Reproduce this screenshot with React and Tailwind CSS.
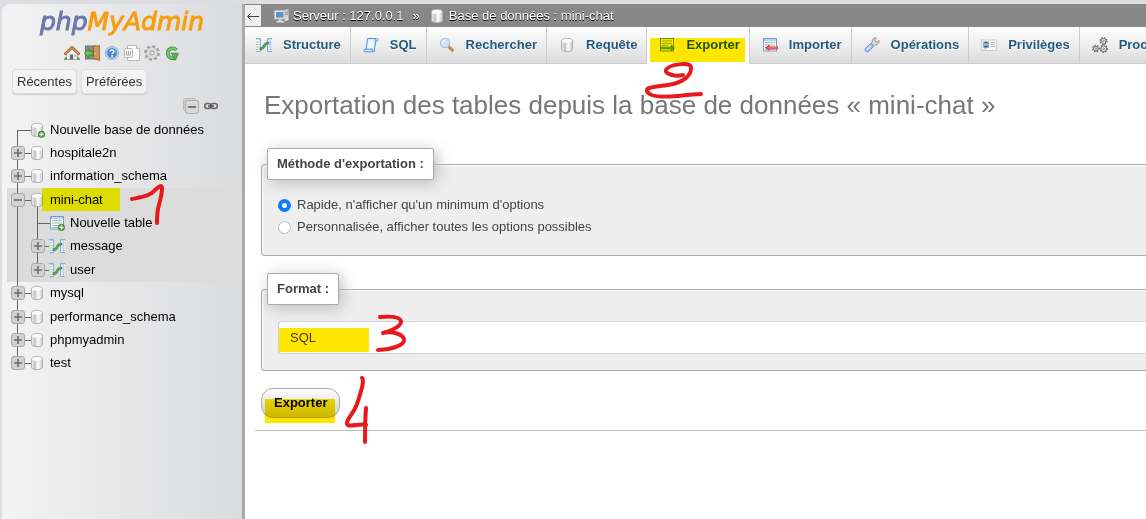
import React from 'react';

function Svg({ children, className = 'size-4 shrink-0' }) {
  return (
    <svg viewBox="0 0 16 16" className={className} aria-hidden="true">
      {children}
    </svg>
  );
}

function DbIcon({ plus, className }) {
  return (
    <Svg className={className}>
      <defs>
        <linearGradient id="dbBody" x1="0" x2="1">
          <stop offset="0" stopColor="#f4f4f4" />
          <stop offset="0.3" stopColor="#c4c4c4" />
          <stop offset="0.6" stopColor="#ffffff" />
          <stop offset="1" stopColor="#c6c6c6" />
        </linearGradient>
      </defs>
      <path d="M2.500 3.800C2.500 .6 13.500.6 13.500 3.800V12.200C13.500 15.400 2.500 15.400 2.500 12.200Z" fill="url(#dbBody)" stroke="#b0b0b0" />
      <ellipse cx="8" cy="3.800" rx="4.900" ry="2" fill="#fafafa" />
      {plus && (
        <>
          <circle cx="12.500" cy="12.300" r="3.300" fill="#4f9a3c" stroke="#3a7a2c" strokeWidth=".6" />
          <path d="M12.500 10.300v4M10.500 12.300h4" stroke="#fff" strokeWidth="1.300" />
        </>
      )}
    </Svg>
  );
}

function RelationIcon() {
  return (
    <Svg>
      <path d="M0 1.500h4.500v13H0zM11.500 1.500H16v13h-4.500z" fill="#f3f8fe" />
      <path d="M0 1.500h4.500v13H0M16 1.500h-4.500v13H16" fill="none" stroke="#86abdf" />
      <path d="M0 2.500h4M12 2.500h4" stroke="#bcd3f2" />
      <path d="M0 5h3.500M0 7.500h3.500M0 10h3.500M0 12.500h3.500" stroke="#a9c29b" strokeWidth=".9" />
      <path d="M12.500 5H16M12.500 7.500H16M12.500 10H16M12.500 12.500H16M14.500 3v11" stroke="#a9c4ea" strokeWidth=".8" />
      <path d="M4.800 11.700c2.200.3 2.600-1.200 3.400-2.800s1.800-2.700 3.800-2.800" fill="none" stroke="#43934a" strokeWidth="2.800" strokeLinecap="round" />
      <path d="M5.500 11.300c1.500 0 2-1 2.600-2.700s1.700-2.400 3.400-2.400" fill="none" stroke="#72bb68" strokeWidth=".8" />
    </Svg>
  );
}

function Sheet() {
  return (
    <>
      <rect x="1.500" y="1.500" width="13" height="12.500" fill="#fff" stroke="#6f9bd8" />
      <path d="M2 3h12" stroke="#b7cff0" strokeWidth="2" />
      <path d="M3 5.500h10M3 8h10M3 10.500h10M3 12.500h10" stroke="#93b889" strokeWidth=".9" />
      <path d="M6 4v9M10 4v9" stroke="#b9d0ee" strokeWidth=".8" />
    </>
  );
}

function NewTableIcon() {
  return (
    <Svg>
      <Sheet />
      <circle cx="12.500" cy="12.400" r="3.200" fill="#4f9a3c" stroke="#3a7a2c" strokeWidth=".6" />
      <path d="M12.500 10.400v4M10.500 12.400h4" stroke="#fff" strokeWidth="1.300" />
    </Svg>
  );
}

function ExportIcon() {
  return (
    <Svg>
      <rect x="1.500" y="1.500" width="13" height="12.500" fill="#fff" stroke="#6f9bd8" />
      <path d="M3 4h10M3 6.500h10M3 8.500h6" stroke="#93b889" strokeWidth=".9" />
      <path d="M5 3v6M8 3v6M11 3v5" stroke="#b9d0ee" strokeWidth=".7" />
      <path d="M1 9.700h11V7.500l4 3.500-4 3.500v-2.200H1z" fill="#3d9a3a" />
      <path d="M2 11h12" stroke="#93dc88" strokeWidth=".8" />
    </Svg>
  );
}

function ImportIcon() {
  return (
    <Svg>
      <Sheet />
      <path d="M16 9.500H7.500V7.500l-4.500 3.300 4.500 3.400v-2H16z" fill="#e2333a" />
      <path d="M5.500 10.900H15" stroke="#ff9a96" strokeWidth=".9" />
    </Svg>
  );
}

function SqlIcon() {
  return (
    <Svg>
      <path d="M4.500 1.500h9c2 0 2 2.600.5 2.600h-1.300L11.500 12c.8 1.200.2 2.800-1 2.800H2c-1.800 0-1.600-2.600 0-2.600h1z" fill="#d3e4fa" stroke="#5b93d6" strokeLinejoin="round" />
      <path d="M5.500 2.800h6L10.300 11.500H4.300z" fill="#edf4fe" />
      <path d="M12.700 4.100c-1.100-.3-1-2.200.3-2.600M3 12.200h6.800c-.7.900-.2 2.300.6 2.500" fill="none" stroke="#5b93d6" />
    </Svg>
  );
}

function SearchIcon() {
  return (
    <Svg>
      <path d="M9.700 9.700l3.700 3.400" stroke="#b87a3c" strokeWidth="3" strokeLinecap="round" />
      <path d="M10.500 10l2.900 2.700" stroke="#edc08c" strokeWidth="1" />
      <circle cx="6" cy="6" r="4.600" fill="#cfe1f8" stroke="#b4c2d8" strokeWidth="1.300" />
      <path d="M3.600 5.500a2.800 2.800 0 0 1 2.400-2.200" fill="none" stroke="#fff" strokeWidth="1.200" />
    </Svg>
  );
}

function WrenchIcon() {
  return (
    <Svg>
      <path d="M8.300 5c-.5-2.500 1.500-4.700 4-4.200L10.700 3l.6 1.700 1.800.5 1.900-1.700c.7 2.800-1.800 4.900-4.200 4.200L9.500 9 7 6.500z" fill="#dcdcdc" stroke="#8c8c8c" strokeWidth=".9" />
      <path d="M6.800 6.300L9.700 9.200l-5 5.300c-2 1.500-4.800-1.100-3.200-3.200z" fill="#a5c3f3" stroke="#5a86cc" strokeWidth=".9" />
      <path d="M7 8.300L3 12.500" stroke="#dbe8fc" strokeWidth="1.200" />
    </Svg>
  );
}

function PrivIcon() {
  return (
    <Svg>
      <rect x=".5" y="3" width="15" height="10.500" fill="#fdfdfd" stroke="#cacaca" />
      <rect x="2" y="4.500" width="6" height="6" fill="#6fb0f0" />
      <circle cx="5" cy="6.700" r="1.500" fill="#e8b087" />
      <path d="M3.200 6.200c.5-1.800 3.100-1.800 3.600 0z" fill="#7a4a22" />
      <path d="M2.500 10.500c.4-2.500 4.600-2.500 5 0z" fill="#2d69b8" />
      <path d="M9.500 5.500h4.500M9.500 7.500h4.500M9.500 9.500h4.500M2.500 12h3.500" stroke="#a6adb7" strokeWidth=".9" />
    </Svg>
  );
}

function Cog({ cx, cy, r }) {
  return (
    <g transform={`translate(${cx} ${cy})`}>
      <circle r={r + 0.8} fill="none" stroke="#5c5c5c" strokeWidth="1.300" strokeDasharray="1.300 1.400" />
      <circle r={r} fill="#f8f8f8" stroke="#5c5c5c" strokeWidth=".9" />
      <circle r=".9" fill="none" stroke="#5c5c5c" strokeWidth=".7" />
    </g>
  );
}

function ProcIcon() {
  return (
    <Svg>
      <Cog cx={11.500} cy={4} r={2.600} />
      <Cog cx={3.800} cy={11.500} r={2.400} />
      <Cog cx={11.700} cy={11.700} r={2.800} />
    </Svg>
  );
}

function HomeIcon() {
  return (
    <Svg>
      <path d="M0 15h16v-1.500H0z" fill="#6fae4e" />
      <path d="M2.500 8.500L8 3.500l5.500 5V14.500h-11z" fill="#f3f3ef" stroke="#9a9a92" strokeWidth=".8" />
      <path d="M1.300 8.800L8 2.300l6.700 6.500" fill="none" stroke="#9b5c22" strokeWidth="2.600" strokeLinejoin="round" strokeLinecap="round" />
      <path d="M1.300 8.800L8 2.300l6.700 6.500" fill="none" stroke="#d79a55" strokeWidth="1.300" strokeLinejoin="round" strokeLinecap="round" />
      <rect x="5.800" y="9.500" width="3.400" height="5" fill="#6e6e72" />
      <rect x="10.500" y="9.800" width="2" height="2" fill="#8fb3df" />
      <path d="M.5 14c.7-2.500 2.300-2 2.800 0M12.800 14c.7-2.500 2.300-2 2.800 0" fill="#4f9a3c" />
    </Svg>
  );
}

function ExitIcon() {
  return (
    <Svg>
      <rect x="1.500" y="1" width="10" height="13" fill="#8b8f8c" stroke="#6e706e" />
      <path d="M9.500 1.500L15.500.5v15l-6-2z" fill="#cf9558" stroke="#9a6026" strokeWidth=".8" />
      <circle cx="11.300" cy="8.500" r=".7" fill="#f6dc8a" />
      <path d="M9 6.300H5V4L.3 8.300 5 12.500v-2.300h4z" fill="#6cc061" stroke="#2f7d2c" strokeWidth=".8" />
    </Svg>
  );
}

function HelpIcon() {
  return (
    <Svg>
      <circle cx="8" cy="8" r="6.700" fill="#c9daf1" stroke="#8aa9d6" strokeWidth=".8" />
      <circle cx="8" cy="8" r="5" fill="#4f86cf" stroke="#7ba3dd" strokeWidth=".8" />
      <path d="M6.200 6.600c0-2.400 3.700-2.300 3.700 0 0 1.400-1.800 1.300-1.800 2.700" fill="none" stroke="#fff" strokeWidth="1.400" />
      <circle cx="8.100" cy="11" r=".9" fill="#fff" />
    </Svg>
  );
}

function DocsIcon() {
  return (
    <Svg>
      <path d="M3.500.5h9l3 3v12h-12z" fill="#fcfcfc" stroke="#b8b8b8" />
      <path d="M12.500.5v3h3" fill="#e6e6e6" stroke="#b8b8b8" />
      <rect x=".5" y="3.500" width="8" height="9" rx="1" fill="#f2f2f2" stroke="#b8b8b8" />
      <path d="M2.500 6v4h4V6M4.500 6v4" fill="none" stroke="#aaa" />
    </Svg>
  );
}

function GearIcon() {
  return (
    <Svg>
      <circle cx="8" cy="8" r="6.600" fill="none" stroke="#9c9c9c" strokeWidth="2.400" strokeDasharray="2.900 2.284" />
      <circle cx="8" cy="8" r="4.900" fill="#dcdcdc" stroke="#9c9c9c" strokeWidth="1.600" />
      <circle cx="8" cy="8" r="4.600" fill="none" stroke="#dedede" strokeWidth="1.600" />
      <circle cx="8" cy="8" r="2" fill="#efefef" stroke="#949494" strokeWidth=".9" />
    </Svg>
  );
}

function ReloadIcon() {
  return (
    <Svg>
      <path d="M12.500 5.200C9.500 1.500 3.800 3.500 3.800 8.200c0 4.300 4.200 6.300 7.400 4.600" fill="none" stroke="#3d8f3c" strokeWidth="3.600" />
      <path d="M12.500 5.200C9.500 1.500 3.800 3.500 3.800 8.200c0 4.300 4.200 6.300 7.400 4.600" fill="none" stroke="#7cc873" strokeWidth="1.800" />
      <path d="M7 8.300h7.500L11.500 15.200z" fill="#5fb458" stroke="#3d8f3c" strokeWidth=".8" />
    </Svg>
  );
}

function CollapseIcon() {
  return (
    <Svg>
      <rect x=".5" y=".5" width="12" height="12.500" rx="2" fill="#d2d2d2" stroke="#b8b8b8" />
      <rect x="2.500" y="2.500" width="13" height="13" rx="2" fill="#d8d8d8" stroke="#acacac" />
      <path d="M5 9h8" stroke="#666" strokeWidth="1.700" />
    </Svg>
  );
}

function LinkIcon() {
  return (
    <Svg>
      <rect x="1.700" y="5.600" width="6.300" height="5" rx="2.500" fill="none" stroke="#666" strokeWidth="1.500" />
      <rect x="8" y="5.600" width="6.300" height="5" rx="2.500" fill="none" stroke="#666" strokeWidth="1.500" />
      <path d="M5 8.100h6" stroke="#555" strokeWidth="1.500" />
    </Svg>
  );
}

function ServerIcon() {
  return (
    <Svg>
      <path d="M10 1.500l5-1v12l-5 1.500z" fill="#d9d9d9" stroke="#777" strokeWidth=".7" />
      <path d="M11 4.500l3-.5M11 6.500l3-.5" stroke="#666" strokeWidth=".8" />
      <circle cx="14" cy="3" r=".7" fill="#5cc04e" />
      <rect x=".5" y="2.500" width="10.500" height="8.500" fill="#e4e4e4" stroke="#bcbcbc" />
      <rect x="2" y="4" width="7.500" height="5.500" fill="#5b8fd0" />
      <path d="M4.500 11.500h3v1.500H10v1.500H2.500V13h2z" fill="#dcdcdc" />
    </Svg>
  );
}

function Toggle({ open, label }) {
  return (
    <button type="button" aria-label={label} className="relative flex size-[14px] items-center justify-center">
      <svg viewBox="0 0 14 14" className="size-[14px]" aria-hidden="true">
        <rect x=".5" y=".5" width="13" height="13" rx="2.500" fill="#d2d2d2" stroke="#a8a8a8" />
        <path d={open ? 'M3 7h8' : 'M3 7h8M7 3v8'} stroke="#6c6c6c" strokeWidth="1.600" />
      </svg>
    </button>
  );
}

const LINE = { full: 'inset-y-0', start: 'top-1/2 bottom-0', end: 'top-0 bottom-1/2' };

function VLine({ span }) {
  return <span className={`absolute left-[10px] w-px bg-[#666] ${LINE[span]}`} />;
}

const ROWS = [
  { name: 'Nouvelle base de données', icon: 'newdb', line: 'start' },
  { name: 'hospitale2n', icon: 'db', toggle: true },
  { name: 'information_schema', icon: 'db', toggle: true },
  { name: 'mini-chat', icon: 'db', toggle: true, open: true, active: true, marked: true },
  { name: 'Nouvelle table', icon: 'newtable', nested: true, active: true, line: 'full' },
  { name: 'message', icon: 'rel', nested: true, toggle: true, active: true, line: 'full' },
  { name: 'user', icon: 'rel', nested: true, toggle: true, active: true, line: 'end' },
  { name: 'mysql', icon: 'db', toggle: true },
  { name: 'performance_schema', icon: 'db', toggle: true },
  { name: 'phpmyadmin', icon: 'db', toggle: true },
  { name: 'test', icon: 'db', toggle: true, line: 'end' },
];

const ICONS = {
  newdb: <DbIcon plus className="size-4 shrink-0" />,
  db: <DbIcon className="size-4 shrink-0" />,
  newtable: <NewTableIcon />,
  rel: <RelationIcon />,
};

function TreeRow({ row }) {
  return (
    <li className={`flex items-stretch ${row.active ? 'bg-[#dcdcdc]' : ''}`}>
      {row.nested && (
        <span className="relative w-5 shrink-0">
          <VLine span="full" />
        </span>
      )}
      <span className="relative flex w-[22px] shrink-0 items-center justify-center">
        <VLine span={row.line || 'full'} />
        <span className="absolute top-1/2 -right-[3px] left-[10px] h-px bg-[#666]" />
        {row.toggle && <Toggle open={row.open} label={row.name} />}
      </span>
      <span className="relative flex w-4 shrink-0 items-center justify-center">
        {row.open && <span className="absolute top-1/2 bottom-0 left-2 w-px bg-[#666]" />}
        <span className="relative">{ICONS[row.icon]}</span>
      </span>
      <a href="#" className="relative flex items-center pl-[5px] text-black">
        {row.name}
        {row.marked && <span className="absolute inset-y-0 -left-[3px] w-[78px] bg-[#ffff00] mix-blend-multiply" />}
      </a>
    </li>
  );
}

function Sidebar() {
  return (
    <aside className="flex w-[240px] shrink-0 flex-col rounded-tl-lg bg-linear-to-r from-[#f3f3f3] to-[#dadbdd]">
      <h2 className="pt-[2px] text-center font-['DejaVu_Sans',sans-serif] text-[25px] leading-[32px] italic">
        <span className="text-[#6c78af] [-webkit-text-stroke:1px_#6c78af]">php</span>
        <span className="text-[#f89c0e] [-webkit-text-stroke:1px_#f89c0e]">MyAdmin</span>
      </h2>
      <nav className="flex justify-center gap-1 pt-[7px]">
        <a href="#" aria-label="Accueil"><HomeIcon /></a>
        <a href="#" aria-label="Quitter"><ExitIcon /></a>
        <a href="#" aria-label="Documentation phpMyAdmin"><HelpIcon /></a>
        <a href="#" aria-label="Documentation"><DocsIcon /></a>
        <a href="#" aria-label="Paramètres"><GearIcon /></a>
        <a href="#" aria-label="Actualiser"><ReloadIcon /></a>
      </nav>
      <div className="flex gap-1 pt-2 pl-[10px] text-[#333]">
        <button type="button" className="h-[25px] rounded border border-[#ddd] bg-[#f3f3f3] px-1 shadow-[0_1px_1px_#ccc]">Récentes</button>
        <button type="button" className="h-[25px] rounded border border-[#ddd] bg-[#f3f3f3] px-1 shadow-[0_1px_1px_#ccc]">Préférées</button>
      </div>
      <div className="flex justify-end gap-1 pt-1 pr-[23px]">
        <a href="#" aria-label="Tout réduire"><CollapseIcon /></a>
        <a href="#" aria-label="Lier au panneau principal"><LinkIcon /></a>
      </div>
      <ul className="mt-1 ml-[5px] grid h-[257px] auto-rows-fr">
        {ROWS.map((row) => (
          <TreeRow key={row.name} row={row} />
        ))}
      </ul>
    </aside>
  );
}

const TABS = [
  ['Structure', <RelationIcon />],
  ['SQL', <SqlIcon />],
  ['Rechercher', <SearchIcon />],
  ['Requête', <DbIcon />],
  ['Exporter', <ExportIcon />],
  ['Importer', <ImportIcon />],
  ['Opérations', <WrenchIcon />],
  ['Privilèges', <PrivIcon />],
  ['Procédures', <ProcIcon />],
];

function Tabs() {
  return (
    <nav className="flex h-[37px] overflow-hidden font-bold text-[#235a81]">
      {TABS.map(([name, icon]) => {
        const active = name === 'Exporter';
        return (
          <a
            key={name}
            href="#"
            className={`relative flex shrink-0 items-center gap-[11px] border-r border-b border-r-[#ccc] pr-[9px] pl-3 [text-shadow:0_1px_0_#fff] first:pl-[11px] ${
              active ? 'border-b-white bg-white' : 'border-b-[#ccc] bg-linear-to-b from-white to-[#dcdcdc]'
            }`}
          >
            {icon}
            {name}
            {active && <span className="absolute top-[11px] right-1 bottom-px left-[3px] bg-[#ffe600] mix-blend-multiply" />}
          </a>
        );
      })}
    </nav>
  );
}

function Panel({ title, children }) {
  return (
    <fieldset className="mb-[17px] ml-[6px] min-w-0 rounded-l border border-r-0 border-[#aaa] bg-[#eee] pr-0 pl-[5px] shadow-[inset_1px_1px_2px_#fff]">
      <legend className="rounded-xs border border-[#aaa] bg-white px-[9px] py-[6px] leading-[18px] font-bold shadow-[3px_3px_15px_#bbb]">
        {title}
      </legend>
      {children}
    </fieldset>
  );
}

function Method({ checked, children }) {
  return (
    <label className="flex h-[22px] items-center gap-[6px]">
      <input
        type="radio"
        name="method"
        defaultChecked={checked}
        className="size-[13px] appearance-none rounded-full border border-[#bbb] bg-white checked:border-4 checked:border-[#0d7bff]"
      />
      {children}
    </label>
  );
}

function Annotations() {
  return (
    <svg
      className="pointer-events-none absolute top-0 left-0 h-[519px] w-[1146px]"
      viewBox="0 0 1146 519"
      fill="none"
      stroke="#e8191c"
      strokeWidth="4"
      strokeLinecap="round"
      strokeLinejoin="round"
      aria-hidden="true"
    >
      <path d="M132 199C142 197 150 196 154 191C158 187 162 184 162 188C162 197 159 203 158 209C157 214 157 219 157 223" />
      <path d="M683 75C675 77 665 74 666 70C668 65 690 61 691 67C692 76 682 83 668 85C655 87 646 87 647 91C649 98 666 97 677 96C686 95 694 94 701 94" />
      <path d="M380 317C392 316 400 317 401 321C402 326 391 331 383 333C392 331 404 334 404 340C404 346 389 350 378 350" />
      <path d="M362 378C365 379 361 392 357 404C353 415 346 419 347 424C349 428 360 423 366 425M366 408C365 420 365 430 365 442" />
    </svg>
  );
}

export default function App() {
  return (
    <div className="relative flex min-h-screen bg-[#dcdde1] pt-1 pl-[2px] font-['Liberation_Sans',Arial,sans-serif] text-[13px] leading-[18px] text-[#444]">
      <Sidebar />
      <div className="w-[3px] shrink-0 bg-[#aaa]" />
      <main className="min-w-0 flex-1 bg-white">
        <header className="flex h-[23px] items-center bg-[#888] text-white [text-shadow:0_1px_0_#000]">
          <button type="button" aria-label="Masquer le panneau" className="flex h-[21px] w-4 items-center justify-center bg-[#eee]">
            <svg viewBox="0 0 14 10" className="h-[10px] w-[14px]" fill="none" stroke="#444" aria-hidden="true">
              <path d="M13 5.500H1.500M4.500 2.500l-3 3 3 3" />
            </svg>
          </button>
          <a href="#" className="flex items-center gap-[3px] pl-[13px]">
            <ServerIcon />
            Serveur : 127.0.0.1
          </a>
          <span className="px-[9px]">»</span>
          <a href="#" className="flex items-center gap-1">
            <DbIcon className="size-4 shrink-0" />
            Base de données : mini-chat
          </a>
        </header>
        <Tabs />
        <form className="overflow-hidden pl-[10px]">
          <h1 className="mt-[25px] mb-[26px] ml-[9px] text-[26px] leading-[33px] whitespace-nowrap text-[#777]">
            Exportation des tables depuis la base de données « mini-chat »
          </h1>
          <Panel title="Méthode d'exportation :">
            <div className="pt-[14px] pb-[17px] pl-[11px]">
              <Method checked>Rapide, n'afficher qu'un minimum d'options</Method>
              <Method>Personnalisée, afficher toutes les options possibles</Method>
            </div>
          </Panel>
          <Panel title="Format :">
            <div className="relative pt-4 pb-4 pl-[11px]">
              <select
                aria-label="Format"
                className="block h-[33px] w-full appearance-none rounded-l border border-r-0 border-[#ced4da] bg-white px-[11px] text-[#444]"
              >
                <option>SQL</option>
              </select>
              <span className="pointer-events-none absolute top-[23px] left-3 h-6 w-[90px] bg-[#ffe600] mix-blend-multiply" />
            </div>
          </Panel>
          <div className="border-b border-[#bbb] pb-3 pl-[6px]">
            <button
              type="submit"
              className="relative h-[30px] rounded-xl border border-[#aaa] bg-linear-to-b from-white to-[#ccc] px-3 font-bold text-black"
            >
              Exporter
              <span className="pointer-events-none absolute top-[10px] -bottom-[6px] left-[3px] w-[70px] bg-[#ffe600] mix-blend-multiply" />
            </button>
          </div>
        </form>
      </main>
      <Annotations />
    </div>
  );
}
